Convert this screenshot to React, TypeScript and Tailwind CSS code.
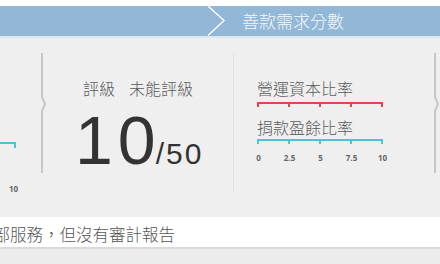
import React from "react";

const cjk = { fontFamily: '"Noto Sans CJK TC", "Noto Sans", sans-serif' };
const num = { fontFamily: '"Open Sans", "Noto Sans", sans-serif' };
const big = { fontFamily: '"Liberation Sans", Arial, sans-serif' };

function NotchDivider() {
  return (
    <svg width="6" height="120" viewBox="0 0 6 120" className="mt-[15px] shrink-0">
      <path d="M1 0 L1 44 L4 51 L1 58 L1 120" fill="none" stroke="#c6c6c6" strokeWidth="2" />
    </svg>
  );
}

function Scale({ color }: { color: string }) {
  const ticks = [0, 31, 62, 93, 124];
  return (
    <svg width="126" height="6" viewBox="0 0 126 6" className="block">
      <rect x="0" y="0" width="126" height="2" fill={color} />
      {ticks.map((t) => (
        <rect key={t} x={t} y="0" width="2" height="5" fill={color} />
      ))}
    </svg>
  );
}

export default function App() {
  return (
    <div className="w-[440px] h-[264px] overflow-hidden bg-white">
      <div className="h-[6px] bg-white" />
      <div className="h-[30px] bg-[#93b7d6] flex items-center">
        <div className="w-[206px] shrink-0" />
        <svg width="20" height="30" viewBox="0 0 20 30" className="shrink-0">
          <path d="M2 0 L18 14.5 L2 29.5" fill="none" stroke="#ffffff" strokeWidth="1.4" />
        </svg>
        <span className="ml-[16px] text-[17px] leading-[30px] text-[#f4f8fb] font-[300]" style={cjk}>
          善款需求分數
        </span>
      </div>
      <div className="h-[2px] bg-[#dce6ef]" />
      <div className="h-[179px] bg-[#efefef] flex items-start">
        <div className="w-[41px] shrink-0 flex flex-col">
          <div className="mt-[104px] w-[16px] flex flex-col items-end">
            <div className="w-[16px] h-[2px] bg-[#4cc4d4]" />
            <div className="w-[2px] h-[4px] bg-[#4cc4d4]" />
          </div>
          <div className="mt-[36px] ml-[9px] text-[8px] leading-[9px] font-bold text-[#666]" style={num}>
            10
          </div>
        </div>
        <NotchDivider />
        <div className="w-[186px] shrink-0 flex flex-col pl-[36px]">
          <div className="mt-[40px] h-[20px] text-[16px] leading-[20px] text-[#5a5a5a] font-[300] whitespace-nowrap flex" style={cjk}>
            <span>評級</span>
            <span className="ml-[14px]">未能評級</span>
          </div>
          <div className="mt-[8px] -ml-[8px] flex items-baseline text-[#333]" style={big}>
            <span className="text-[68px] leading-none">
              <span className="mr-[5px]">1</span>0
            </span>
            <span className="text-[30px] leading-none tracking-[2px]">/50</span>
          </div>
        </div>
        <div className="w-[1px] h-[139px] mt-[15px] bg-[#e2e2e2] shrink-0" />
        <div className="w-[200px] shrink-0 flex flex-col pl-[23px]">
          <div className="mt-[40px] text-[16px] leading-[20px] text-[#5a5a5a] font-[300] whitespace-nowrap" style={cjk}>
            營運資本比率
          </div>
          <div className="mt-[4px]">
            <Scale color="#e0474d" />
          </div>
          <div className="mt-[9px] text-[16px] leading-[20px] text-[#5a5a5a] font-[300] whitespace-nowrap" style={cjk}>
            捐款盈餘比率
          </div>
          <div className="mt-[2px]">
            <Scale color="#4cc4d4" />
          </div>
          <div className="mt-[8px] -ml-[14px] w-[155px] grid grid-cols-5 text-center text-[8px] leading-[9px] font-bold text-[#666]" style={num}>
            <span>0</span>
            <span>2.5</span>
            <span>5</span>
            <span>7.5</span>
            <span>10</span>
          </div>
        </div>
        <NotchDivider />
      </div>
      <div className="h-[30px] bg-white flex items-center pt-[3px] overflow-hidden">
        <span className="ml-[-6.5px] text-[16.5px] leading-[24px] text-[#555] font-[300] whitespace-nowrap" style={cjk}>
          部服務，但沒有審計報告
        </span>
      </div>
      <div className="h-[17px] bg-[#ececec] border-t-[2px] border-[#d9d9d9]" />
    </div>
  );
}
